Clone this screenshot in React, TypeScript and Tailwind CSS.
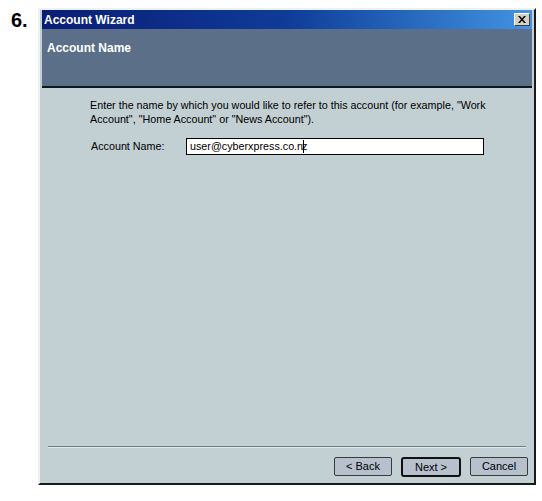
export default function App() {
  return (
    <div className="w-[542px] h-[501px] bg-white font-['Liberation_Sans',Arial,sans-serif] flex items-start pt-[8px] pl-[11px]">
      <div className="w-[27px] pt-[1px] text-[20px] leading-[22px] font-bold text-black">6.</div>

      {/* window */}
      <div className="w-[498px] h-[477px] flex flex-col border-t-2 border-l-2 border-t-[#eef1f2] border-l-[#eef1f2] border-r-2 border-b-2 border-r-[#1a1a1a] border-b-[#1a1a1a] bg-[#c2cfd3] px-[2px] pb-[2px]">
        {/* title bar */}
        <div className="h-[19px] flex items-center justify-between bg-gradient-to-r from-[#0a1c76] via-[#0f3c98] to-[#4394e2] pl-[2px] pr-[2px]">
          <span className="text-white text-[12px] font-bold leading-none">Account Wizard</span>
          <button className="w-[16px] h-[13px] flex items-center justify-center bg-[#d4d0c8] border border-t-white border-l-white border-r-[#404040] border-b-[#404040]">
            <svg width="8" height="7" viewBox="0 0 8 7">
              <path d="M0 0 L2 0 L4 2.5 L6 0 L8 0 L5 3.5 L8 7 L6 7 L4 4.5 L2 7 L0 7 L3 3.5 Z" fill="#000" />
            </svg>
          </button>
        </div>

        {/* header */}
        <div className="h-[59px] bg-[#5b6f88] border-b-2 border-b-[#101820] pl-[5px] pt-[10px] leading-[16px]">
          <span className="text-white text-[12px] font-bold">Account Name</span>
        </div>

        {/* body */}
        <div className="flex-1 flex flex-col text-[10.75px] text-black">
          <div className="pl-[48px] pt-[10px] leading-[14px] whitespace-nowrap">
            Enter the name by which you would like to refer to this account (for example, "Work
            <br />
            Account", "Home Account" or "News Account").
          </div>
          <div className="flex items-center pl-[49px] mt-[12px]">
            <span className="w-[95px]">Account Name:</span>
            <div className="w-[298px] h-[17px] bg-white border border-black flex items-center pl-[3px]">
              user@cyberxpress.co.n
              <span className="inline-block w-[1px] h-[13px] bg-black" />
              <span className="-ml-[2px]">z</span>
            </div>
          </div>

          <div className="mt-auto mx-[6px] border-t border-t-[#6c7d84] border-b border-b-[#e2e9eb]" />
          <div className="flex justify-end gap-[9px] pr-[4px] pt-[9px] pb-[4px]">
            <button className="w-[58px] h-[19px] rounded-[2px] bg-[#b6c1cd] border border-[#3a3a3a] text-[11px] leading-none">
              &lt; Back
            </button>
            <button className="w-[60px] h-[20px] rounded-[3px] bg-[#b6c1cd] border-2 border-[#111] text-[11px] leading-none">
              Next &gt;
            </button>
            <button className="w-[58px] h-[19px] rounded-[2px] bg-[#b6c1cd] border border-[#3a3a3a] text-[11px] leading-none">
              Cancel
            </button>
          </div>
        </div>
      </div>
    </div>
  )
}
